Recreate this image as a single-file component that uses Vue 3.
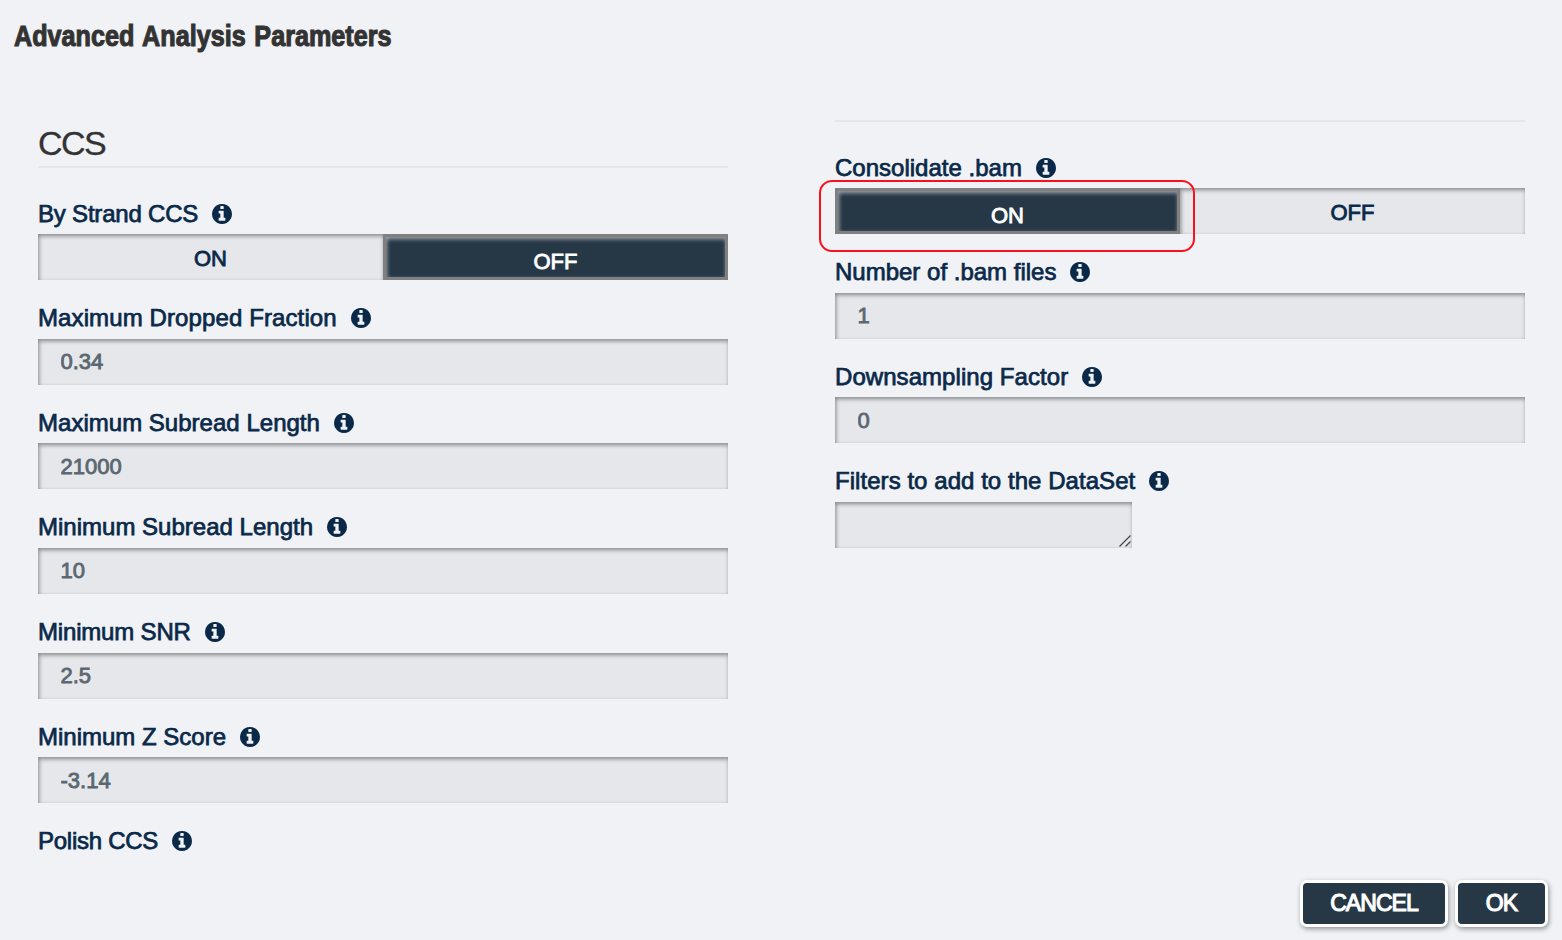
<script setup>
// `tracking` is the letter-spacing of the label, in pixels
const columns = [
  {
    title: 'CCS',
    fields: [
      { label: 'By Strand CCS', tracking: -0.2, type: 'toggle', value: 'OFF' },
      { label: 'Maximum Dropped Fraction', tracking: 0.11, type: 'input', value: '0.34' },
      { label: 'Maximum Subread Length', tracking: 0.02, type: 'input', value: '21000' },
      { label: 'Minimum Subread Length', tracking: 0.01, type: 'input', value: '10' },
      { label: 'Minimum SNR', tracking: -0.18, type: 'input', value: '2.5' },
      { label: 'Minimum Z Score', tracking: 0, type: 'input', value: '-3.14' },
      { label: 'Polish CCS', tracking: -0.27, type: 'none' },
    ],
  },
  {
    title: '',
    fields: [
      { label: 'Consolidate .bam', tracking: 0.01, type: 'toggle', value: 'ON', marked: true },
      { label: 'Number of .bam files', tracking: 0, type: 'input', value: '1' },
      { label: 'Downsampling Factor', tracking: 0.06, type: 'input', value: '0' },
      { label: 'Filters to add to the DataSet', tracking: 0.05, type: 'textarea', value: '' },
    ],
  },
]
</script>

<template>
  <main class="dialog">
    <h1><span>Advanced Analysis Parameters</span></h1>
    <div class="columns">
      <section v-for="(col, i) in columns" :key="i" class="column">
        <h2 :class="{ empty: !col.title }">{{ col.title }}</h2>
        <div v-for="f in col.fields" :key="f.label" class="field">
          <div class="label">
            <span class="text" :style="{ letterSpacing: f.tracking + 'px' }">{{ f.label }}</span>
            <svg class="info" viewBox="128 128 1536 1536">
              <path d="M1152 1376v-160q0-14-9-23t-23-9h-96V672q0-14-9-23t-23-9H672q-14 0-23 9t-9 23v160q0 14 9 23t23 9h96v320h-96q-14 0-23 9t-9 23v160q0 14 9 23t23 9h448q14 0 23-9t9-23zM1024 480V320q0-14-9-23t-23-9H800q-14 0-23 9t-9 23v160q0 14 9 23t23 9h192q14 0 23-9t9-23zM1664 896q0 209-103 385.500T1281.500 1561 896 1664 510.500 1561 231 1281.500 128 896 231 510.500 510.500 231 896 128 1281.500 231 1561 510.500 1664 896z" />
            </svg>
          </div>
          <div v-if="f.type === 'toggle'" class="toggle">
            <button v-for="o in ['ON', 'OFF']" :key="o" :class="{ active: o === f.value }">{{ o }}</button>
            <i v-if="f.marked" class="marker"></i>
          </div>
          <input v-else-if="f.type === 'input'" class="box" type="text" :value="f.value" />
          <div v-else-if="f.type === 'textarea'" class="box area">
            <svg viewBox="0 0 12 12"><path d="M.5 11.500 11.500 .5M6.500 11.500 11.500 6.500" /></svg>
          </div>
        </div>
      </section>
    </div>
    <footer><button>CANCEL</button><button class="ok">OK</button></footer>
  </main>
</template>

<style>
body { background: #f0f2f6; overflow: hidden; }
</style>
<style scoped>
.dialog { position: relative; box-sizing: border-box; width: 1562px; height: 940px; overflow: hidden; padding: 18px 37px 0 38px; background: #f0f2f6; font-family: "Liberation Sans", Arial, sans-serif; color: #0a2949; }
h1 { margin: 0 0 0 -24px; height: 36px; font-size: 29px; line-height: 36px; color: #333; }
h1 span { display: inline-block; transform: scaleX(.868); transform-origin: 0 50%; white-space: nowrap; word-spacing: 2px; -webkit-text-stroke: 1.1px #333; }
.columns { display: flex; justify-content: space-between; margin-top: 66px; }
.column { width: 690px; }
h2 { box-sizing: border-box; height: 48px; margin: 0 0 31px; border-bottom: 2px solid #e4e7e8; font-size: 34px; font-weight: 400; line-height: 47px; color: #333; letter-spacing: -1.6px; -webkit-text-stroke: .3px #333; }
h2.empty { height: 2px; }
.field { height: 104.67px; }
.label { display: flex; align-items: center; height: 29px; margin-bottom: 6px; font-size: 24px; white-space: nowrap; }
.text { -webkit-text-stroke: .75px #0a2949; }
.info { width: 20px; height: 20px; margin-left: 14px; fill: #0a2949; }
.box, .toggle { box-sizing: border-box; display: block; width: 100%; height: 46px; }
.toggle { position: relative; display: flex; }
.box, .toggle button { border: 0; border-radius: 0; outline: 0; background: #e5e7eb; box-shadow: inset 1px 2px 4px rgba(0, 0, 0, .42); font: 22px "Liberation Sans", Arial, sans-serif; }
.box { padding: 1px 22px 0 22.5px; color: #5b6770; -webkit-text-stroke: .85px #5b6770; }
.toggle button { box-sizing: border-box; width: 345px; height: 46px; padding: 4px 0 0; color: #0a2949; -webkit-text-stroke: .85px #0a2949; }
.toggle .active { border: 3px solid #808080; padding-top: 9px; background: #263746; box-shadow: inset 1px 2px 4px rgba(175, 178, 182, .9); color: #fff; -webkit-text-stroke-color: #fff; }
.marker { position: absolute; left: -16px; top: -8px; box-sizing: border-box; width: 376px; height: 72px; border: 2px solid #f9101f; border-radius: 13px; }
.area { display: flex; width: 297px; padding: 0 1px 1px 0; align-items: flex-end; justify-content: flex-end; }
.area svg { width: 12px; height: 12px; fill: none; stroke: #444; stroke-width: 1.2; }
footer { position: absolute; right: 14px; bottom: 13px; display: flex; gap: 7px; }
footer button { box-sizing: border-box; width: 148px; height: 47px; padding: 0; border: 3px solid #fff; border-radius: 7px; background: #263746; box-shadow: 1px 2px 5px rgba(0, 0, 0, .4); color: #fff; font: 23px "Liberation Sans", Arial, sans-serif; letter-spacing: -.95px; -webkit-text-stroke: 1.1px #fff; }
footer .ok { width: 93px; }
</style>
